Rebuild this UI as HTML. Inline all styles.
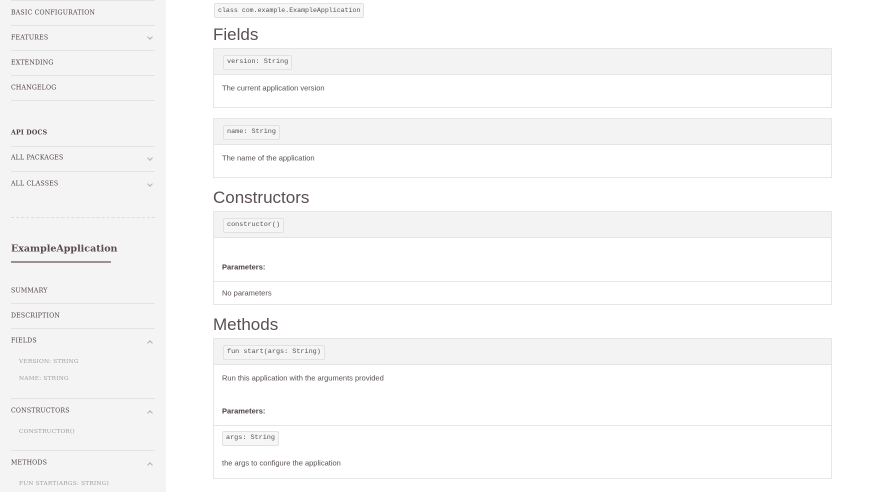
<!DOCTYPE html>
<html><head><meta charset="utf-8"><style>
*{margin:0;padding:0;box-sizing:border-box}
body{width:880px;height:492px;overflow:hidden;background:#fff;position:relative;font-family:"Liberation Sans",sans-serif;color:#5a4f55}
#sb{position:absolute;left:0;top:0;width:166px;height:492px;background:#f4f4f4}
.it{position:absolute;left:11px;font-family:"DejaVu Serif","Liberation Serif",serif;font-size:6.2px;letter-spacing:.2px;color:#4f4047;transform:translateY(-50%)}
.sub{left:19px;color:#a39aa0;font-size:5.8px}
.ln{position:absolute;left:11px;width:144px;height:1px;background:#e3e3e3}
.ch{position:absolute;left:148px;width:4px;height:4px;border-right:1px solid #b5b0b3;border-bottom:1px solid #b5b0b3;transform:rotate(45deg)}
.up{transform:rotate(-135deg)}
.box{position:absolute;left:213px;width:619px;border:1px solid #e6e6e6;background:#fff}
.hd{height:26px;background:#f3f3f3;border-bottom:1px solid #e4e4e4;position:relative}
code{position:absolute;font-family:"Liberation Mono",monospace;font-size:6.8px;color:#555;background:#f6f6f6;border:1px solid #e2e2e2;border-radius:2px;padding:2px 3px;line-height:9px}
.hd code{left:9px;top:6px;background:#f5f5f5}
.t{position:absolute;left:222px;font-size:7.5px;color:#5a4f55;transform:translateY(-50%)}
.b{font-weight:bold;color:#4a3f45}
h2{position:absolute;left:213px;font-weight:normal;font-size:17px;color:#5a4f55;transform:translateY(-50%)}
.hl{position:absolute;left:214px;width:617px;height:1px;background:#e6e6e6}
</style></head><body>
<div id="sb">
<div class="ln" style="top:0"></div>
<div class="it" style="top:13px">BASIC CONFIGURATION</div><div class="ln" style="top:25px"></div>
<div class="it" style="top:38px">FEATURES</div><div class="ch" style="top:35px"></div><div class="ln" style="top:50px"></div>
<div class="it" style="top:63px">EXTENDING</div><div class="ln" style="top:75px"></div>
<div class="it" style="top:88px">CHANGELOG</div><div class="ln" style="top:100px"></div>
<div class="it" style="top:133px;font-weight:bold">API DOCS</div><div class="ln" style="top:146px"></div>
<div class="it" style="top:158px">ALL PACKAGES</div><div class="ch" style="top:156px"></div><div class="ln" style="top:171px"></div>
<div class="it" style="top:184px">ALL CLASSES</div><div class="ch" style="top:182px"></div>
<div style="position:absolute;left:11px;top:217px;width:144px;border-top:1px dashed #ddd"></div>
<div class="it" style="top:249px;font-size:9.5px;font-weight:bold;color:#5a4a52;letter-spacing:0">ExampleApplication</div>
<div style="position:absolute;left:11px;top:261px;width:100px;height:2px;background:#a08e96"></div>
<div class="it" style="top:291px">SUMMARY</div><div class="ln" style="top:303px"></div>
<div class="it" style="top:316px">DESCRIPTION</div><div class="ln" style="top:328px"></div>
<div class="it" style="top:341px">FIELDS</div><div class="ch up" style="top:341px"></div>
<div class="it sub" style="top:362px">VERSION: STRING</div>
<div class="it sub" style="top:379px">NAME: STRING</div><div class="ln" style="top:398px"></div>
<div class="it" style="top:411px">CONSTRUCTORS</div><div class="ch up" style="top:411px"></div>
<div class="it sub" style="top:432px">CONSTRUCTOR()</div><div class="ln" style="top:450px"></div>
<div class="it" style="top:463px">METHODS</div><div class="ch up" style="top:463px"></div>
<div class="it sub" style="top:484px">FUN START(ARGS: STRING)</div>
</div>

<code style="left:214px;top:3px;font-size:6.6px">class com.example.ExampleApplication</code>
<h2 style="top:35px">Fields</h2>
<div class="box" style="top:48px;height:60px"><div class="hd"><code>version: String</code></div></div>
<div class="t" style="top:88px">The current application version</div>
<div class="box" style="top:118px;height:60px"><div class="hd"><code>name: String</code></div></div>
<div class="t" style="top:158px">The name of the application</div>
<h2 style="top:198px">Constructors</h2>
<div class="box" style="top:211px;height:94px"><div class="hd"><code>constructor()</code></div></div>
<div class="t b" style="top:267px">Parameters:</div>
<div class="hl" style="top:281px"></div>
<div class="t" style="top:293px">No parameters</div>
<h2 style="top:325px">Methods</h2>
<div class="box" style="top:338px;height:141px"><div class="hd"><code>fun start(args: String)</code></div></div>
<div class="t" style="top:378px">Run this application with the arguments provided</div>
<div class="t b" style="top:411px">Parameters:</div>
<div class="hl" style="top:425px"></div>
<code style="left:222px;top:431px">args: String</code>
<div class="t" style="top:463px">the args to configure the application</div>
</body></html>
